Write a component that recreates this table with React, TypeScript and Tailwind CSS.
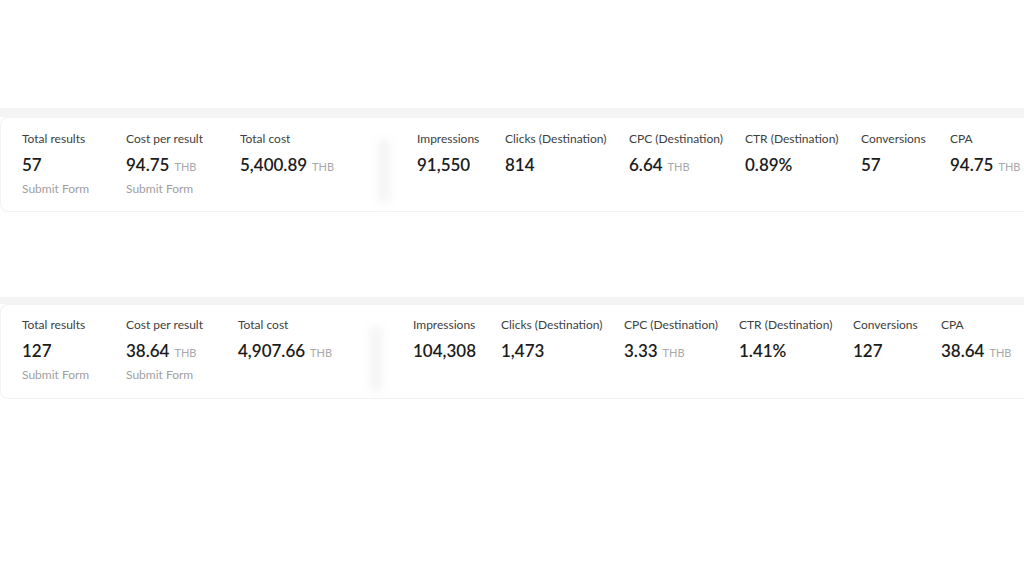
import React from "react";

type Metric = {
  label: string;
  value: string;
  unit?: string;
  sub?: string;
  width: string;
};

type Card = {
  left: Metric[];
  right: Metric[];
  dividerGap: string;
  top: string;
  band: string;
  padTop: string;
};

const cards: Card[] = [
  {
    top: "mt-[108px]",
    band: "h-[9px]",
    padTop: "pt-[13px]",
    dividerGap: "pl-[27px]",
    left: [
      { label: "Total results", value: "57", sub: "Submit Form", width: "w-[104px]" },
      { label: "Cost per result", value: "94.75", unit: "THB", sub: "Submit Form", width: "w-[114px]" },
      { label: "Total cost", value: "5,400.89", unit: "THB", width: "w-[138px]" },
    ],
    right: [
      { label: "Impressions", value: "91,550", width: "w-[88px]" },
      { label: "Clicks (Destination)", value: "814", width: "w-[124px]" },
      { label: "CPC (Destination)", value: "6.64", unit: "THB", width: "w-[116px]" },
      { label: "CTR (Destination)", value: "0.89%", width: "w-[116px]" },
      { label: "Conversions", value: "57", width: "w-[89px]" },
      { label: "CPA", value: "94.75", unit: "THB", width: "w-[90px]" },
    ],
  },
  {
    top: "mt-[85px]",
    band: "h-[7px]",
    padTop: "pt-[12px]",
    dividerGap: "pl-[31px]",
    left: [
      { label: "Total results", value: "127", sub: "Submit Form", width: "w-[104px]" },
      { label: "Cost per result", value: "38.64", unit: "THB", sub: "Submit Form", width: "w-[112px]" },
      { label: "Total cost", value: "4,907.66", unit: "THB", width: "w-[132px]" },
    ],
    right: [
      { label: "Impressions", value: "104,308", width: "w-[88px]" },
      { label: "Clicks (Destination)", value: "1,473", width: "w-[123px]" },
      { label: "CPC (Destination)", value: "3.33", unit: "THB", width: "w-[115px]" },
      { label: "CTR (Destination)", value: "1.41%", width: "w-[114px]" },
      { label: "Conversions", value: "127", width: "w-[88px]" },
      { label: "CPA", value: "38.64", unit: "THB", width: "w-[90px]" },
    ],
  },
];

const MetricCell = ({ m }: { m: Metric }) => (
  <div className={`${m.width} shrink-0 flex flex-col`}>
    <span className="text-[12px] leading-[16px] text-[#404040] whitespace-nowrap">{m.label}</span>
    <div className="mt-[7px] h-[22px] flex items-baseline whitespace-nowrap leading-[22px]">
      <span className="text-[17px] font-semibold text-[#1c1c1c]">{m.value}</span>
      {m.unit && <span className="ml-[5px] text-[11px] leading-[14px] text-[#a8a8a8]">{m.unit}</span>}
    </div>
    {m.sub && <span className="mt-[5px] text-[12px] leading-[16px] text-[#a0a0a0] whitespace-nowrap">{m.sub}</span>}
  </div>
);

const SummaryCard = ({ card }: { card: Card }) => (
  <section className={card.top}>
    <div className={`${card.band} bg-[#f4f4f4]`} />
    <div className={`h-[95px] bg-white rounded-l-lg border border-r-0 border-[#f3f3f3] flex items-start ${card.padTop} pl-[21px] overflow-hidden`}>
      <div className="flex shrink-0">
        {card.left.map((m) => (
          <MetricCell key={m.label} m={m} />
        ))}
      </div>
      <div className="shrink-0 self-center w-[12px] h-[66px] bg-[#f4f4f4] blur-[5px] rounded-full" />
      <div className={`flex shrink-0 ${card.dividerGap}`}>
        {card.right.map((m) => (
          <MetricCell key={m.label} m={m} />
        ))}
      </div>
    </div>
  </section>
);

export default function App() {
  return (
    <div className="w-[1024px] h-[573px] bg-white overflow-hidden" style={{ fontFamily: 'Lato, "Noto Sans", sans-serif' }}>
      {cards.map((c, i) => (
        <SummaryCard key={i} card={c} />
      ))}
    </div>
  );
}
